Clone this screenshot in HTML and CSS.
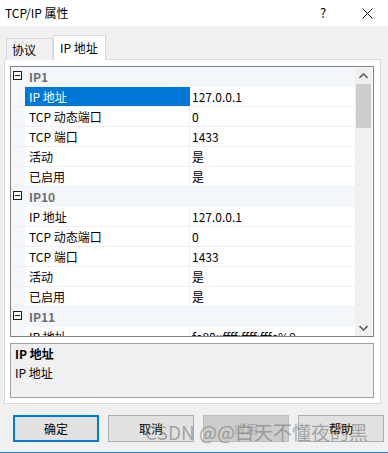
FILE: index.html
```html
<!DOCTYPE html>
<html lang="zh-CN">
<head>
    <meta charset="UTF-8">
    <title>TCP/IP 属性</title>
    <link rel="stylesheet" href="styles.css">
</head>
<body>

    <div class="window">
        <div class="titlebar">
            <span class="title">TCP/IP 属性</span>
            <span class="help">?</span>
            <svg class="close" width="11" height="11" viewBox="0 0 11 11">
                <path d="M0.5 0.5 L10.5 10.5 M10.5 0.5 L0.5 10.5" stroke="#111" stroke-width="1" fill="none"/>
            </svg>
        </div>

        <div class="content">
            <div class="tabs">
                <div class="tab">协议</div>
                <div class="tab active">IP 地址</div>
            </div>

            <div class="panel">
                <div class="grid">
                    <div class="rows">
                        <div class="cat"><span class="gut"><i class="toggle"></i></span><span class="cat-name">IP1</span></div>
                        <div class="row selected"><span class="gut"></span><span class="name">IP 地址</span><span class="val">127.0.0.1</span></div>
                        <div class="row"><span class="gut"></span><span class="name">TCP 动态端口</span><span class="val">0</span></div>
                        <div class="row"><span class="gut"></span><span class="name">TCP 端口</span><span class="val">1433</span></div>
                        <div class="row"><span class="gut"></span><span class="name">活动</span><span class="val">是</span></div>
                        <div class="row"><span class="gut"></span><span class="name">已启用</span><span class="val">是</span></div>

                        <div class="cat"><span class="gut"><i class="toggle"></i></span><span class="cat-name">IP10</span></div>
                        <div class="row"><span class="gut"></span><span class="name">IP 地址</span><span class="val">127.0.0.1</span></div>
                        <div class="row"><span class="gut"></span><span class="name">TCP 动态端口</span><span class="val">0</span></div>
                        <div class="row"><span class="gut"></span><span class="name">TCP 端口</span><span class="val">1433</span></div>
                        <div class="row"><span class="gut"></span><span class="name">活动</span><span class="val">是</span></div>
                        <div class="row"><span class="gut"></span><span class="name">已启用</span><span class="val">是</span></div>

                        <div class="cat"><span class="gut"><i class="toggle"></i></span><span class="cat-name">IP11</span></div>
                        <div class="row"><span class="gut"></span><span class="name">IP 地址</span><span class="val">fe80::ffff:ffff:fffe%9</span></div>
                    </div>
                    <div class="scrollbar">
                        <div class="arrow">
                            <svg width="9" height="6" viewBox="0 0 9 6"><path d="M0.5 5 L4.5 1 L8.5 5" stroke="#606060" stroke-width="1.6" fill="none"/></svg>
                        </div>
                        <div class="thumb"></div>
                        <div class="track"></div>
                        <div class="arrow">
                            <svg width="9" height="6" viewBox="0 0 9 6"><path d="M0.5 1 L4.5 5 L8.5 1" stroke="#606060" stroke-width="1.6" fill="none"/></svg>
                        </div>
                    </div>
                </div>

                <div class="desc">
                    <p class="desc-title">IP 地址</p>
                    <p class="desc-text">IP 地址</p>
                </div>
            </div>

            <div class="buttons">
                <button class="btn default">确定</button>
                <button class="btn">取消</button>
                <button class="btn disabled">应用</button>
                <button class="btn">帮助</button>
            </div>
        </div>

        <div class="watermark">CSDN @@白天不懂夜的黑</div>
    </div>

</body>
</html>
```

FILE: styles.css
```css
body {
    margin: 0;
    font-family: "Noto Sans CJK SC", "Noto Sans", sans-serif;
    font-size: 12px;
    color: #000;
    background-color: #f0f0f0;
}
.window {
    position: relative;
    width: 388px;
    height: 453px;
    background-color: #f0f0f0;
    border-bottom: 1px solid #1883d7;
    box-sizing: border-box;
    overflow: hidden;
}
.titlebar {
    height: 26px;
    background-color: #fff;
    display: flex;
    align-items: center;
}
.title {
    margin-left: 5px;
    flex: 1;
    line-height: 16px;
}
.help {
    width: 12px;
    font-size: 13px;
    line-height: 16px;
}
.close {
    margin-left: 30px;
    margin-right: 15px;
}
.content {
    padding: 9px 0 0 4px;
}
.tabs {
    display: flex;
    align-items: flex-end;
    height: 25px;
    margin-left: 2px;
    margin-bottom: -1px;
    position: relative;
    z-index: 1;
}
.tab {
    height: 22px;
    width: 47px;
    box-sizing: border-box;
    border: 1px solid #d9d9d9;
    border-bottom: none;
    background-color: #f0f0f0;
    padding-left: 5px;
    line-height: 21px;
}
.tab.active {
    height: 25px;
    width: 53px;
    background-color: #fff;
    border-right-color: #d9d9d9;
    padding-left: 6px;
    line-height: 23px;
}
.panel {
    width: 377px;
    height: 345px;
    box-sizing: border-box;
    border: 1px solid #d9d9d9;
    background-color: #fff;
    padding: 6px 6px 0 5px;
}
.grid {
    display: flex;
    height: 271px;
    border: 1px solid #828282;
    box-sizing: border-box;
}
.rows {
    width: 344px;
    overflow: hidden;
}
.cat, .row {
    display: flex;
    height: 20px;
    box-sizing: border-box;
    border-bottom: 1px solid #f0f0f0;
    line-height: 19px;
}
.cat {
    background-color: #f3f6fa;
    border-bottom-color: #f3f6fa;
}
.gut {
    width: 14px;
    flex-shrink: 0;
    background-color: #f3f6fa;
    position: relative;
}
.toggle {
    position: absolute;
    left: 2px;
    top: 4px;
    width: 9px;
    height: 9px;
    box-sizing: border-box;
    border: 1px solid #222;
    background-color: #fff;
}
.toggle::after {
    content: "";
    position: absolute;
    left: 1px;
    top: 3px;
    width: 5px;
    height: 1px;
    background-color: #222;
}
.cat-name {
    padding-left: 4px;
    font-weight: bold;
    color: #6d6d6d;
}
.name {
    width: 165px;
    flex-shrink: 0;
    box-sizing: border-box;
    padding-left: 4px;
    border-right: 1px solid #f0f0f0;
}
.val {
    padding-left: 2px;
    white-space: nowrap;
}
.row.selected .name {
    background-color: #0078d7;
    color: #fff;
    border-right-color: #0078d7;
}
.scrollbar {
    width: 17px;
    display: flex;
    flex-direction: column;
    background-color: #f0f0f0;
}
.arrow {
    height: 17px;
    display: flex;
    align-items: center;
    justify-content: center;
}
.thumb {
    height: 44px;
    margin: 0 1px;
    background-color: #cdcdcd;
}
.track {
    flex: 1;
}
.desc {
    margin-top: 6px;
    height: 55px;
    box-sizing: border-box;
    border: 1px solid #a0a0a0;
    background-color: #f0f0f0;
    padding: 0 4px;
}
.desc p {
    margin: 0;
    line-height: 19px;
}
.desc-title {
    font-weight: bold;
}
.buttons {
    display: flex;
    gap: 9px;
    margin-top: 11px;
    padding-left: 9px;
}
.btn {
    width: 86px;
    height: 27px;
    font-family: inherit;
    font-size: 12px;
    background-color: #e1e1e1;
    border: 1px solid #adadad;
    padding: 0;
    color: #000;
}
.btn.default {
    border: 2px solid #0078d7;
}
.btn.disabled {
    background-color: #cccccc;
    border-color: #bfbfbf;
    color: #a8a8a8;
}
.watermark {
    position: absolute;
    left: 145px;
    top: 420px;
    font-size: 19px;
    line-height: 24px;
    color: rgba(110, 110, 110, 0.55);
    white-space: nowrap;
    pointer-events: none;
}
```
